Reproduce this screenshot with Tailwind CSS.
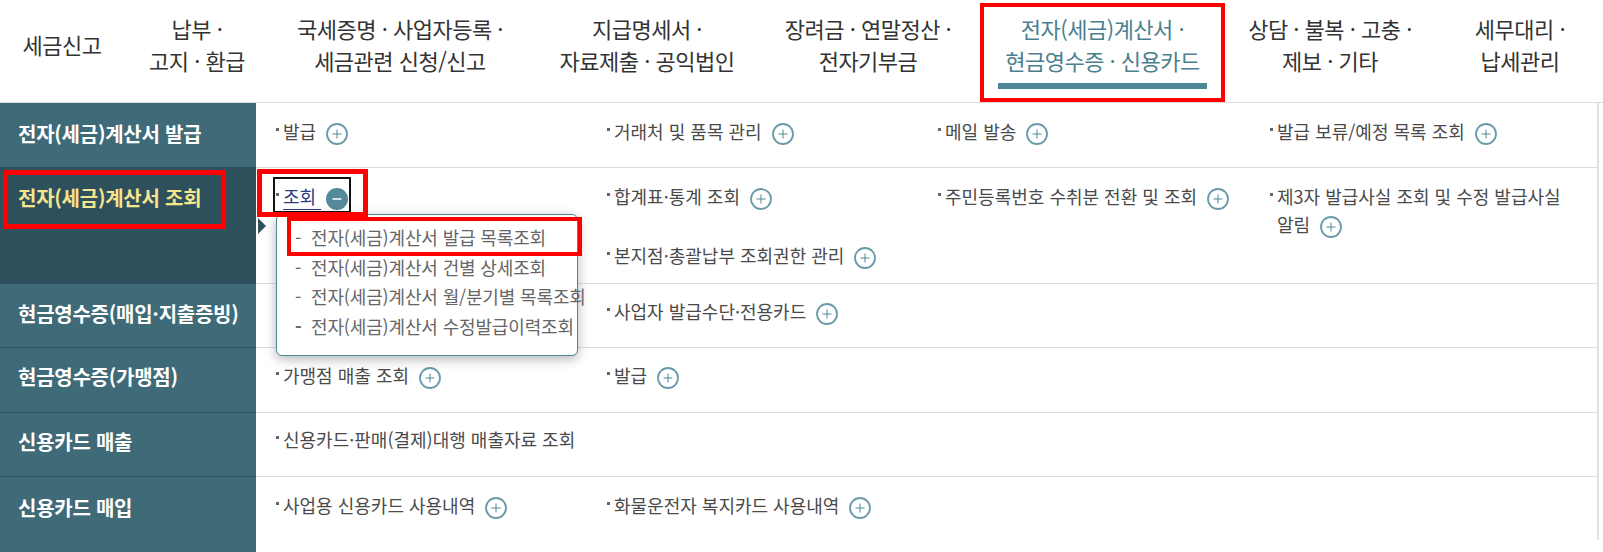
<!DOCTYPE html>
<html lang="ko">
  <head>
    <meta charset="UTF-8" />
    <title>전자(세금)계산서 조회</title>
    <script src="https://cdn.jsdelivr.net/npm/@tailwindcss/browser@4"></script>
  </head>
  <body class="relative h-[552px] w-[1603px] overflow-hidden bg-white font-['Noto_Sans_CJK_KR','Liberation_Sans',sans-serif] text-[#4a4a4a]">
    <!-- top nav -->
    <nav class="flex h-[103px] border-b border-[#ddd] text-center text-[22px] leading-[32px] tracking-[-0.5px] text-[#333]">
      <a class="flex w-[124px] items-center justify-center pb-[14px]">세금신고</a>
      <a class="flex w-[146px] items-center justify-center pb-[14px]">납부 ·<br />고지 · 환급</a>
      <a class="flex w-[260px] items-center justify-center pb-[14px]">국세증명 · 사업자등록 ·<br />세금관련 신청/신고</a>
      <a class="flex w-[234px] items-center justify-center pb-[14px]">지급명세서 ·<br />자료제출 · 공익법인</a>
      <a class="mr-[8px] flex w-[208px] items-center justify-center pb-[14px]">장려금 · 연말정산 ·<br />전자기부금</a>
      <a class="flex w-[245px] flex-col items-center pt-[12px] text-[#4a7f8f]">
        <span>전자(세금)계산서 ·<br />현금영수증 · 신용카드</span>
        <span class="mt-[7px] h-[6px] w-[209px] bg-[#4d8796]"></span>
      </a>
      <a class="mr-[8px] flex w-[210px] items-center justify-center pb-[14px]">상담 · 불복 · 고충 ·<br />제보 · 기타</a>
      <a class="flex w-[154px] items-center justify-center pb-[14px]">세무대리 ·<br />납세관리</a>
    </nav>

    <div class="flex">
      <!-- left menu -->
      <ul class="h-[449px] w-[256px] shrink-0 bg-[#3f6a78] text-[20px] font-bold tracking-[-0.25px] text-white">
        <li class="h-[64px] pl-[18px] pt-[17px] leading-[28px]">전자(세금)계산서 발급</li>
        <li class="h-[116px] bg-[#2e505d] pl-[18px] pt-[17px] leading-[28px] text-[#f5e58c]">전자(세금)계산서 조회</li>
        <li class="h-[64px] border-t border-[#2f5562] pl-[18px] pt-[16px] leading-[28px]">현금영수증(매입·지출증빙)</li>
        <li class="h-[65px] border-t border-[#2f5562] pl-[18px] pt-[15px] leading-[28px]">현금영수증(가맹점)</li>
        <li class="h-[64px] border-t border-[#2f5562] pl-[18px] pt-[15px] leading-[28px]">신용카드 매출</li>
        <li class="h-[76px] border-t border-[#2f5562] pl-[18px] pt-[17px] leading-[28px]">신용카드 매입</li>
      </ul>

      <!-- sub menu table -->
      <div class="h-[437px] w-[1343px] border-r-2 border-[#e2e2e2] text-[18px] leading-[28px]">
        <div class="grid h-[64px] grid-cols-[331px_331px_332px_1fr] pl-[20px] pt-[14px]">
          <p class="flex"><i class="mr-[4px] mt-[11px] size-[3px] shrink-0 bg-[#666]"></i><span>발급 <svg class="ml-[5px] inline size-[22px] align-[-6px]" viewBox="0 0 22 22" fill="none"><circle cx="11" cy="11" r="10" stroke="#6a9aa8" stroke-width="1.8" /><path d="M11 6.5v9M6.5 11h9" stroke="#4d8796" /></svg></span></p>
          <p class="flex"><i class="mr-[4px] mt-[11px] size-[3px] shrink-0 bg-[#666]"></i><span>거래처 및 품목 관리 <svg class="ml-[5px] inline size-[22px] align-[-6px]" viewBox="0 0 22 22" fill="none"><circle cx="11" cy="11" r="10" stroke="#6a9aa8" stroke-width="1.8" /><path d="M11 6.5v9M6.5 11h9" stroke="#4d8796" /></svg></span></p>
          <p class="flex"><i class="mr-[4px] mt-[11px] size-[3px] shrink-0 bg-[#666]"></i><span>메일 발송 <svg class="ml-[5px] inline size-[22px] align-[-6px]" viewBox="0 0 22 22" fill="none"><circle cx="11" cy="11" r="10" stroke="#6a9aa8" stroke-width="1.8" /><path d="M11 6.5v9M6.5 11h9" stroke="#4d8796" /></svg></span></p>
          <p class="flex"><i class="mr-[4px] mt-[11px] size-[3px] shrink-0 bg-[#666]"></i><span>발급 보류/예정 목록 조회 <svg class="ml-[5px] inline size-[22px] align-[-6px]" viewBox="0 0 22 22" fill="none"><circle cx="11" cy="11" r="10" stroke="#6a9aa8" stroke-width="1.8" /><path d="M11 6.5v9M6.5 11h9" stroke="#4d8796" /></svg></span></p>
        </div>
        <div class="grid h-[116px] grid-cols-[331px_331px_332px_1fr] border-t border-[#ddd] pl-[20px] pt-[14px]">
          <p class="flex"><i class="mr-[4px] mt-[11px] size-[3px] shrink-0 bg-[#666]"></i><span><u class="text-[#2c3a80] underline-offset-[5px]">조회&nbsp;</u> <svg class="inline size-[22px] align-[-6px]" viewBox="0 0 22 22" fill="none"><circle cx="11" cy="11" r="11" fill="#54899a" /><path d="M6.5 11h9" stroke="#fff" stroke-width="1.5" /></svg></span></p>
          <div>
            <p class="flex"><i class="mr-[4px] mt-[11px] size-[3px] shrink-0 bg-[#666]"></i><span>합계표·통계 조회 <svg class="ml-[5px] inline size-[22px] align-[-6px]" viewBox="0 0 22 22" fill="none"><circle cx="11" cy="11" r="10" stroke="#6a9aa8" stroke-width="1.8" /><path d="M11 6.5v9M6.5 11h9" stroke="#4d8796" /></svg></span></p>
            <p class="mt-[31px] flex"><i class="mr-[4px] mt-[11px] size-[3px] shrink-0 bg-[#666]"></i><span>본지점·총괄납부 조회권한 관리 <svg class="ml-[5px] inline size-[22px] align-[-6px]" viewBox="0 0 22 22" fill="none"><circle cx="11" cy="11" r="10" stroke="#6a9aa8" stroke-width="1.8" /><path d="M11 6.5v9M6.5 11h9" stroke="#4d8796" /></svg></span></p>
          </div>
          <p class="flex"><i class="mr-[4px] mt-[11px] size-[3px] shrink-0 bg-[#666]"></i><span>주민등록번호 수취분 전환 및 조회 <svg class="ml-[5px] inline size-[22px] align-[-6px]" viewBox="0 0 22 22" fill="none"><circle cx="11" cy="11" r="10" stroke="#6a9aa8" stroke-width="1.8" /><path d="M11 6.5v9M6.5 11h9" stroke="#4d8796" /></svg></span></p>
          <p class="flex"><i class="mr-[4px] mt-[11px] size-[3px] shrink-0 bg-[#666]"></i><span class="w-[300px]">제3자 발급사실 조회 및 수정 발급사실 알림 <svg class="ml-[5px] inline size-[22px] align-[-6px]" viewBox="0 0 22 22" fill="none"><circle cx="11" cy="11" r="10" stroke="#6a9aa8" stroke-width="1.8" /><path d="M11 6.5v9M6.5 11h9" stroke="#4d8796" /></svg></span></p>
        </div>
        <div class="grid h-[64px] grid-cols-[331px_331px_332px_1fr] border-t border-[#ddd] pl-[20px] pt-[13px]">
          <span></span>
          <p class="flex"><i class="mr-[4px] mt-[11px] size-[3px] shrink-0 bg-[#666]"></i><span>사업자 발급수단·전용카드 <svg class="ml-[5px] inline size-[22px] align-[-6px]" viewBox="0 0 22 22" fill="none"><circle cx="11" cy="11" r="10" stroke="#6a9aa8" stroke-width="1.8" /><path d="M11 6.5v9M6.5 11h9" stroke="#4d8796" /></svg></span></p>
        </div>
        <div class="grid h-[65px] grid-cols-[331px_331px_332px_1fr] border-t border-[#ddd] pl-[20px] pt-[13px]">
          <p class="flex"><i class="mr-[4px] mt-[11px] size-[3px] shrink-0 bg-[#666]"></i><span>가맹점 매출 조회 <svg class="ml-[5px] inline size-[22px] align-[-6px]" viewBox="0 0 22 22" fill="none"><circle cx="11" cy="11" r="10" stroke="#6a9aa8" stroke-width="1.8" /><path d="M11 6.5v9M6.5 11h9" stroke="#4d8796" /></svg></span></p>
          <p class="flex"><i class="mr-[4px] mt-[11px] size-[3px] shrink-0 bg-[#666]"></i><span>발급 <svg class="ml-[5px] inline size-[22px] align-[-6px]" viewBox="0 0 22 22" fill="none"><circle cx="11" cy="11" r="10" stroke="#6a9aa8" stroke-width="1.8" /><path d="M11 6.5v9M6.5 11h9" stroke="#4d8796" /></svg></span></p>
        </div>
        <div class="h-[64px] border-t border-[#ddd] pl-[20px] pt-[12px]">
          <p class="flex"><i class="mr-[4px] mt-[11px] size-[3px] shrink-0 bg-[#666]"></i><span>신용카드·판매(결제)대행 매출자료 조회</span></p>
        </div>
        <div class="grid h-[64px] grid-cols-[331px_331px_332px_1fr] border-t border-[#ddd] pl-[20px] pt-[14px]">
          <p class="flex"><i class="mr-[4px] mt-[11px] size-[3px] shrink-0 bg-[#666]"></i><span>사업용 신용카드 사용내역 <svg class="ml-[5px] inline size-[22px] align-[-6px]" viewBox="0 0 22 22" fill="none"><circle cx="11" cy="11" r="10" stroke="#6a9aa8" stroke-width="1.8" /><path d="M11 6.5v9M6.5 11h9" stroke="#4d8796" /></svg></span></p>
          <p class="flex"><i class="mr-[4px] mt-[11px] size-[3px] shrink-0 bg-[#666]"></i><span>화물운전자 복지카드 사용내역 <svg class="ml-[5px] inline size-[22px] align-[-6px]" viewBox="0 0 22 22" fill="none"><circle cx="11" cy="11" r="10" stroke="#6a9aa8" stroke-width="1.8" /><path d="M11 6.5v9M6.5 11h9" stroke="#4d8796" /></svg></span></p>
        </div>
      </div>
    </div>

    <!-- popup under 조회 -->
    <i class="absolute left-[258px] top-[218px] h-0 w-0 border-y-[8px] border-l-[8px] border-y-transparent border-l-[#2e505d]"></i>
    <div class="absolute left-[276px] top-[214px] h-[142px] w-[302px] rounded-[6px] border border-[#4d8796] bg-white pl-[18px] pt-[8px] text-[18px] leading-[29.6px] tracking-[-0.15px] text-[#666] shadow-[0_3px_12px_rgba(0,0,0,0.3)]">
      <p class="whitespace-nowrap"><span class="inline-block w-[16px]">-</span>전자(세금)계산서 발급 목록조회</p>
      <p class="whitespace-nowrap"><span class="inline-block w-[16px]">-</span>전자(세금)계산서 건별 상세조회</p>
      <p class="whitespace-nowrap"><span class="inline-block w-[16px]">-</span>전자(세금)계산서 월/분기별 목록조회</p>
      <p class="whitespace-nowrap"><span class="inline-block w-[16px] font-bold">-</span>전자(세금)계산서 수정발급이력조회</p>
    </div>

    <!-- annotation boxes -->
    <div class="absolute left-[980px] top-[3px] h-[99px] w-[245px] border-4 border-[#f00]"></div>
    <div class="absolute left-[3px] top-[170px] h-[59px] w-[223px] border-[5px] border-[#f00]"></div>
    <div class="absolute left-[273px] top-[177px] h-[36px] w-[78px] border-2 border-[#111]"></div>
    <div class="absolute left-[257px] top-[169px] h-[48px] w-[111px] border-[5px] border-[#f00]"></div>
    <div class="absolute left-[287px] top-[217px] h-[39px] w-[295px] border-4 border-[#f00]"></div>
  </body>
</html>
